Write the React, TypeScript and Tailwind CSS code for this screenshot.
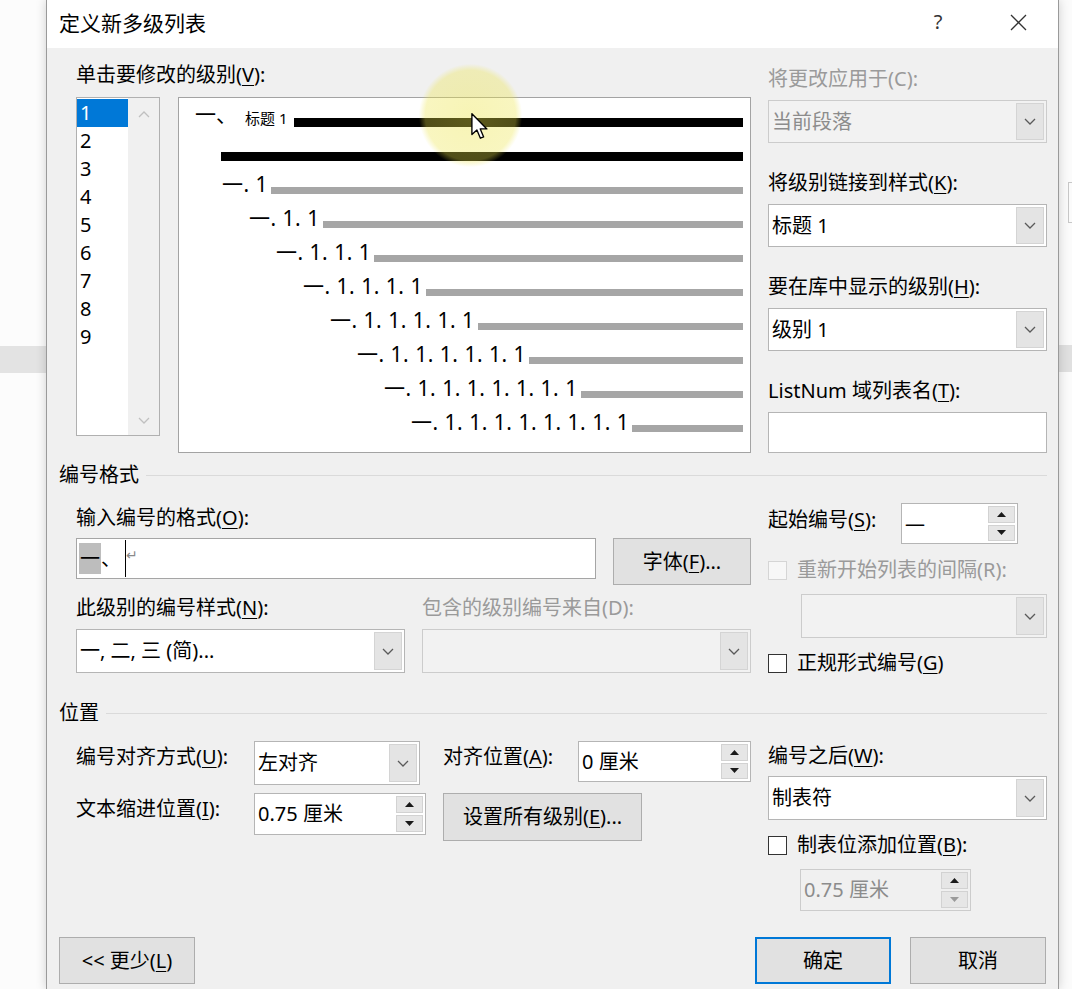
import React from 'react';

type Kids = { children?: React.ReactNode; className?: string };

const Chevron = ({ className = '' }: { className?: string }) => (
  <svg width="12" height="7" viewBox="0 0 12 7" className={className}>
    <path d="M1 1l5 5 5-5" fill="none" stroke="currentColor" strokeWidth="1.3" />
  </svg>
);

const Tri = ({ up = false, className = '' }: { up?: boolean; className?: string }) => (
  <svg width="9" height="5" viewBox="0 0 9 5" className={className}>
    <path d={up ? 'M0 5L4.5 0L9 5Z' : 'M0 0L9 0L4.5 5Z'} fill="currentColor" />
  </svg>
);

const Lbl = ({ children, className = '' }: Kids) => (
  <div className={`h-[24px] leading-[24px] whitespace-nowrap ${className}`}>{children}</div>
);

const U = ({ children }: Kids) => <u className="underline underline-offset-[3px] decoration-1">{children}</u>;

const Combo = ({ value = '', className = '', disabled = false }: { value?: string; className?: string; disabled?: boolean }) => (
  <div
    className={`flex border ${
      disabled ? 'border-[#cccccc] bg-[#f2f2f2] text-[#8c8c8c]' : 'border-[#b5b5b5] bg-white text-black'
    } ${className}`}
  >
    <div className="flex-1 flex items-center pl-[3px] whitespace-nowrap overflow-hidden">{value}</div>
    <div className="my-[2px] mr-[2px] w-[28px] flex items-center justify-center bg-[#e4e4e4] border border-[#d4d4d4] text-[#5a5a5a]">
      <Chevron />
    </div>
  </div>
);

const Spin = ({ value = '', className = '', disabled = false }: { value?: string; className?: string; disabled?: boolean }) => (
  <div
    className={`flex border ${
      disabled ? 'border-[#cccccc] bg-[#f0f0f0] text-[#8c8c8c]' : 'border-[#b5b5b5] bg-white text-black'
    } ${className}`}
  >
    <div className="flex-1 flex items-center pl-[3px] whitespace-nowrap">{value}</div>
    <div className="my-[2px] mr-[2px] w-[27px] flex flex-col gap-[2px]">
      <div className="flex-1 flex items-center justify-center bg-[#e6e6e6] border border-[#d2d2d2] text-[#1a1a1a]">
        <Tri up />
      </div>
      <div
        className={`flex-1 flex items-center justify-center bg-[#e6e6e6] border border-[#d2d2d2] ${
          disabled ? 'text-[#9a9a9a]' : 'text-[#1a1a1a]'
        }`}
      >
        <Tri />
      </div>
    </div>
  </div>
);

const Check = ({ disabled = false }: { disabled?: boolean }) => (
  <span
    className={`w-[19px] h-[19px] shrink-0 border ${
      disabled ? 'border-[#d5d5d5] bg-[#f7f7f7]' : 'border-[#333333] bg-white'
    }`}
  />
);

const Btn = ({ children, className = '', primary = false }: Kids & { primary?: boolean }) => (
  <button
    className={`flex items-center justify-center bg-[#e1e1e1] whitespace-nowrap ${
      primary ? 'border-2 border-[#0078d7]' : 'border border-[#adadad]'
    } ${className}`}
  >
    {children}
  </button>
);

const Sep = ({ children, className = '' }: Kids) => (
  <div className={`flex items-center h-[24px] pl-[12px] pr-[11px] ${className}`}>
    <span className="leading-[24px]">{children}</span>
    <div className="flex-1 ml-[7px] h-px bg-[#dadada]" />
  </div>
);

const ListBox = () => (
  <div className="w-[84px] h-[339px] shrink-0 border border-[#b0b0b0] bg-white flex">
    <div className="flex-1 pt-[1px]">
      {[1, 2, 3, 4, 5, 6, 7, 8, 9].map((n) => (
        <div key={n} className={`h-[28px] leading-[28px] pl-[3px] ${n === 1 ? 'bg-[#0078d7] text-white' : ''}`}>
          {n}
        </div>
      ))}
    </div>
    <div className="w-[31px] bg-[#f0f0f0] flex flex-col items-center justify-between pt-[13px] pb-[11px] text-[#c0c0c0]">
      <Chevron className="rotate-180" />
      <Chevron />
    </div>
  </div>
);

const Preview = () => {
  const levels = [2, 3, 4, 5, 6, 7, 8, 9];
  return (
    <div className="relative w-[573px] h-[356px] shrink-0 border border-[#a3a3a3] bg-white pt-[7px] pr-[7px]">
      <div className="flex items-center h-[34px] pl-[16px]">
        <span className="text-[21px] leading-none -translate-y-[8px]">一、</span>
        <span className="text-[15px] leading-none ml-[8px] -translate-y-[4px]">标题 1</span>
        <div className="flex-1 h-[9px] bg-black ml-[7px]" />
      </div>
      <div className="flex items-center h-[34px] pl-[42px]">
        <div className="flex-1 h-[9px] bg-black" />
      </div>
      {levels.map((n, i) => (
        <div key={n} className="flex items-center h-[34px]">
          <div className="shrink-0" style={{ width: 43 + i * 27 }} />
          <span className="text-[21px] leading-none tracking-[0.5px] whitespace-nowrap -translate-y-[6px]">
            {'一' + '. 1'.repeat(n - 1)}
          </span>
          <div className="flex-1 h-[7px] bg-[#a6a6a6] ml-[3px]" />
        </div>
      ))}
      <div className="absolute left-[240px] top-[-34px] w-[103px] h-[103px] pointer-events-none bg-[radial-gradient(circle,rgba(236,228,70,0.4)_0%,rgba(236,228,70,0.34)_62%,rgba(236,228,70,0)_71%)]" />
      <svg width="18" height="27" viewBox="0 0 13 20" className="absolute left-[292px] top-[15px]">
        <path
          d="M0.5 0.5 L0.5 16 L4.2 12.6 L6.8 18.7 L9.2 17.7 L6.7 11.8 L11.6 11.8 Z"
          fill="white"
          stroke="black"
          strokeWidth="1"
          strokeLinejoin="round"
        />
      </svg>
    </div>
  );
};

export default function App() {
  return (
    <div className="flex w-[1072px] h-[989px] overflow-hidden bg-white text-[20px] text-black font-['Noto_Sans','Noto_Sans_CJK_SC',sans-serif]">
      {/* word window behind, left */}
      <div className="w-[46px] shrink-0 flex flex-col bg-[#fcfcfc]">
        <div className="h-[346px]" />
        <div className="h-[27px] bg-[#e3e3e3]" />
      </div>

      {/* dialog */}
      <div className="relative z-10 w-[1013px] shrink-0 flex flex-col border-x border-[#9a9a9a] bg-[#f0f0f0] shadow-[0_0_10px_rgba(0,0,0,0.18)]">
        <div className="h-[48px] shrink-0 flex items-center bg-white">
          <span className="pl-[12px] text-[21px]">定义新多级列表</span>
          <div className="ml-auto flex">
            <div className="w-[80px] h-[48px] flex items-center justify-center text-[20px] text-[#333333] -translate-y-[2px]">?</div>
            <div className="w-[80px] h-[48px] flex items-center justify-center">
              <svg width="17" height="17" viewBox="0 0 17 17" className="-translate-y-[2px]">
                <path d="M1 1L16 16M16 1L1 16" stroke="#333333" strokeWidth="1.3" />
              </svg>
            </div>
          </div>
        </div>

        {/* top section */}
        <div className="flex gap-[17px] pl-[29px] pr-[11px]">
          <div className="w-[675px] pt-[15px]">
            <Lbl>
              单击要修改的级别(<U>V</U>):
            </Lbl>
            <div className="mt-[10px] flex gap-[18px] items-start">
              <ListBox />
              <Preview />
            </div>
          </div>
          <div className="w-[279px] pt-[19px]">
            <Lbl className="text-[#9a9a9a]">将更改应用于(C):</Lbl>
            <Combo disabled value="当前段落" className="mt-[9px] h-[43px]" />
            <Lbl className="mt-[28px]">
              将级别链接到样式(<U>K</U>):
            </Lbl>
            <Combo value="标题 1" className="mt-[9px] h-[43px]" />
            <Lbl className="mt-[28px]">
              要在库中显示的级别(<U>H</U>):
            </Lbl>
            <Combo value="级别 1" className="mt-[9px] h-[43px]" />
            <Lbl className="mt-[28px]">
              ListNum 域列表名(<U>T</U>):
            </Lbl>
            <div className="mt-[9px] h-[41px] bg-white border border-[#b5b5b5]" />
          </div>
        </div>

        <Sep className="mt-[10px]">编号格式</Sep>

        {/* number format */}
        <div className="flex gap-[17px] pl-[29px] pr-[11px]">
          <div className="w-[675px]">
            <Lbl className="mt-[19px]">
              输入编号的格式(<U>O</U>):
            </Lbl>
            <div className="mt-[8px] flex gap-[17px] items-start">
              <div className="w-[520px] h-[41px] bg-white border border-[#a5a5a5] flex items-center pl-[2px]">
                <span className="bg-[#bdbdbd] h-[31px] leading-[31px] px-[1px]">一</span>
                <span>、</span>
                <span className="w-px h-[37px] bg-black ml-[4px]" />
                <span className="text-[14px] text-[#8a8a8a] -translate-y-[4px]">↵</span>
              </div>
              <Btn className="w-[138px] h-[47px]">
                字体(<U>F</U>)...
              </Btn>
            </div>
            <div className="mt-[11px] flex gap-[17px]">
              <Lbl className="w-[329px]">
                此级别的编号样式(<U>N</U>):
              </Lbl>
              <Lbl className="w-[329px] text-[#9a9a9a]">包含的级别编号来自(D):</Lbl>
            </div>
            <div className="mt-[9px] flex gap-[17px]">
              <Combo value="一, 二, 三 (简)..." className="w-[329px] h-[44px]" />
              <Combo disabled className="w-[329px] h-[44px]" />
            </div>
          </div>
          <div className="w-[279px]">
            <div className="mt-[16px] flex items-start">
              <Lbl className="w-[133px] mt-[5px]">
                起始编号(<U>S</U>):
              </Lbl>
              <Spin value="—" className="w-[117px] h-[41px]" />
            </div>
            <div className="mt-[14px] h-[24px] flex items-center gap-[10px]">
              <Check disabled />
              <span className="text-[#9a9a9a] whitespace-nowrap">重新开始列表的间隔(R):</span>
            </div>
            <Combo disabled className="mt-[12px] ml-[33px] w-[246px] h-[44px]" />
            <div className="mt-[13px] h-[24px] flex items-center gap-[10px]">
              <Check />
              <span className="whitespace-nowrap">
                正规形式编号(<U>G</U>)
              </span>
            </div>
          </div>
        </div>

        <Sep className="mt-[26px]">位置</Sep>

        {/* position */}
        <div className="flex gap-[17px] pl-[29px] pr-[11px]">
          <div className="w-[675px]">
            <div className="mt-[16px] flex items-start">
              <Lbl className="w-[178px] mt-[4px]">
                编号对齐方式(<U>U</U>):
              </Lbl>
              <Combo value="左对齐" className="w-[166px] h-[44px]" />
              <Lbl className="ml-[23px] w-[135px] mt-[4px]">
                对齐位置(<U>A</U>):
              </Lbl>
              <Spin value="0 厘米" className="w-[173px] h-[41px]" />
            </div>
            <div className="mt-[8px] flex items-start">
              <Lbl className="w-[178px] mt-[4px]">
                文本缩进位置(<U>I</U>):
              </Lbl>
              <Spin value="0.75 厘米" className="w-[172px] h-[42px]" />
              <Btn className="ml-[17px] w-[199px] h-[48px]">
                设置所有级别(<U>E</U>)...
              </Btn>
            </div>
          </div>
          <div className="w-[279px]">
            <Lbl className="mt-[19px]">
              编号之后(<U>W</U>):
            </Lbl>
            <Combo value="制表符" className="mt-[8px] h-[44px]" />
            <div className="mt-[13px] h-[24px] flex items-center gap-[10px]">
              <Check />
              <span className="whitespace-nowrap">
                制表位添加位置(<U>B</U>):
              </span>
            </div>
            <Spin disabled value="0.75 厘米" className="mt-[12px] ml-[32px] w-[171px] h-[42px]" />
          </div>
        </div>

        {/* buttons */}
        <div className="mt-[26px] flex pl-[12px] pr-[12px]">
          <Btn className="w-[136px] h-[47px]">
            &lt;&lt; 更少(<U>L</U>)
          </Btn>
          <div className="ml-auto flex gap-[19px]">
            <Btn primary className="w-[136px] h-[47px]">
              确定
            </Btn>
            <Btn className="w-[136px] h-[47px]">取消</Btn>
          </div>
        </div>
      </div>

      {/* word window behind, right */}
      <div className="flex-1 flex flex-col bg-[#fbfbfb]">
        <div className="h-[182px]" />
        <div className="pl-[9px]">
          <div className="w-[6px] h-[41px] border border-r-0 border-[#c8c8c8]" />
        </div>
        <div className="h-[122px]" />
        <div className="h-[27px] bg-[#e0e0e0]" />
      </div>
    </div>
  );
}
